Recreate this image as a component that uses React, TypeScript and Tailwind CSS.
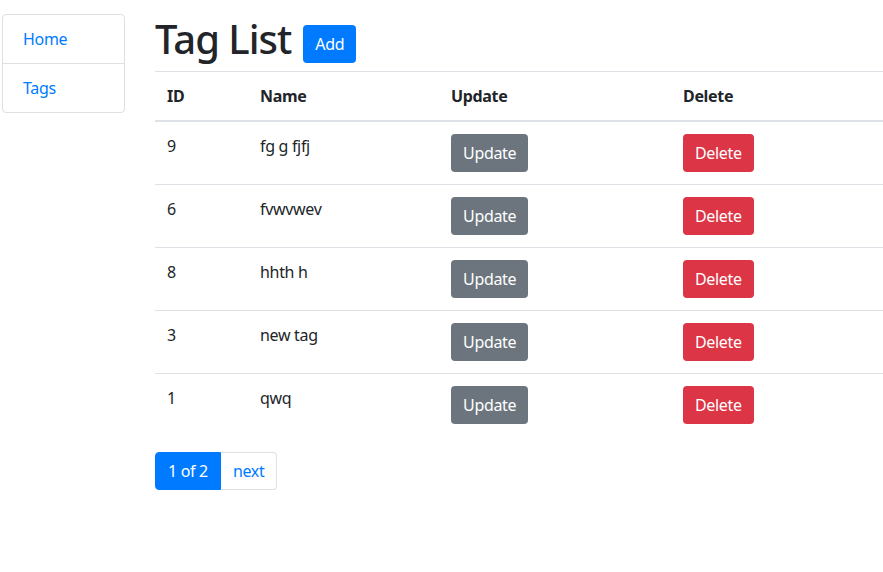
import React from "react";

const rows = [
  { id: 9, name: "fg g fjfj" },
  { id: 6, name: "fvwvwev" },
  { id: 8, name: "hhth h" },
  { id: 3, name: "new tag" },
  { id: 1, name: "qwq" },
];

const font = { fontFamily: '"Noto Sans", "Open Sans", sans-serif' };

export default function App() {
  return (
    <div className="flex min-h-[572px] bg-white text-[#212529] text-base leading-6 tracking-[-0.02em] overflow-hidden" style={font}>
      <div className="w-[123px] ml-[2px] mt-[14px] shrink-0 self-start">
        <div className="border border-[#dfdfdf] rounded-[4px] flex flex-col">
          <a className="px-5 py-3 text-[#007bff] border-b border-[#dfdfdf] leading-6">Home</a>
          <a className="px-5 py-3 text-[#007bff] leading-6">Tags</a>
        </div>
      </div>
      <div className="ml-[30px] mt-[15px] flex-1 min-w-0">
        <div className="flex items-end gap-3 mb-2">
          <h1 className="text-[40px] leading-[48px] font-medium tracking-[-0.025em]">Tag List</h1>
          <button className="h-[38px] px-3 rounded-[4px] bg-[#007bff] text-white text-base">Add</button>
        </div>
        <div className="w-[740px]">
          <div className="grid grid-cols-[93px_191px_232px_1fr] border-t border-[#dee2e6] border-b-2 font-bold">
            <div className="p-3">ID</div>
            <div className="p-3">Name</div>
            <div className="p-3">Update</div>
            <div className="p-3">Delete</div>
          </div>
          {rows.map((r, i) => (
            <div key={r.id} className={`grid grid-cols-[93px_191px_232px_1fr] ${i > 0 ? "border-t border-[#dee2e6]" : ""}`}>
              <div className="p-3">{r.id}</div>
              <div className="p-3">{r.name}</div>
              <div className="p-3">
                <button className="h-[38px] px-3 rounded-[4px] bg-[#6c757d] text-white">Update</button>
              </div>
              <div className="p-3">
                <button className="h-[38px] px-3 rounded-[4px] bg-[#dc3545] text-white">Delete</button>
              </div>
            </div>
          ))}
        </div>
        <div className="flex mt-[16px]">
          <span className="h-[38px] px-3 flex items-center bg-[#007bff] text-white rounded-l-[4px] border border-[#007bff]">1 of 2</span>
          <span className="h-[38px] px-3 flex items-center text-[#007bff] border border-[#dee2e6] border-l-0 rounded-r-[4px]">next</span>
        </div>
      </div>
    </div>
  );
}
